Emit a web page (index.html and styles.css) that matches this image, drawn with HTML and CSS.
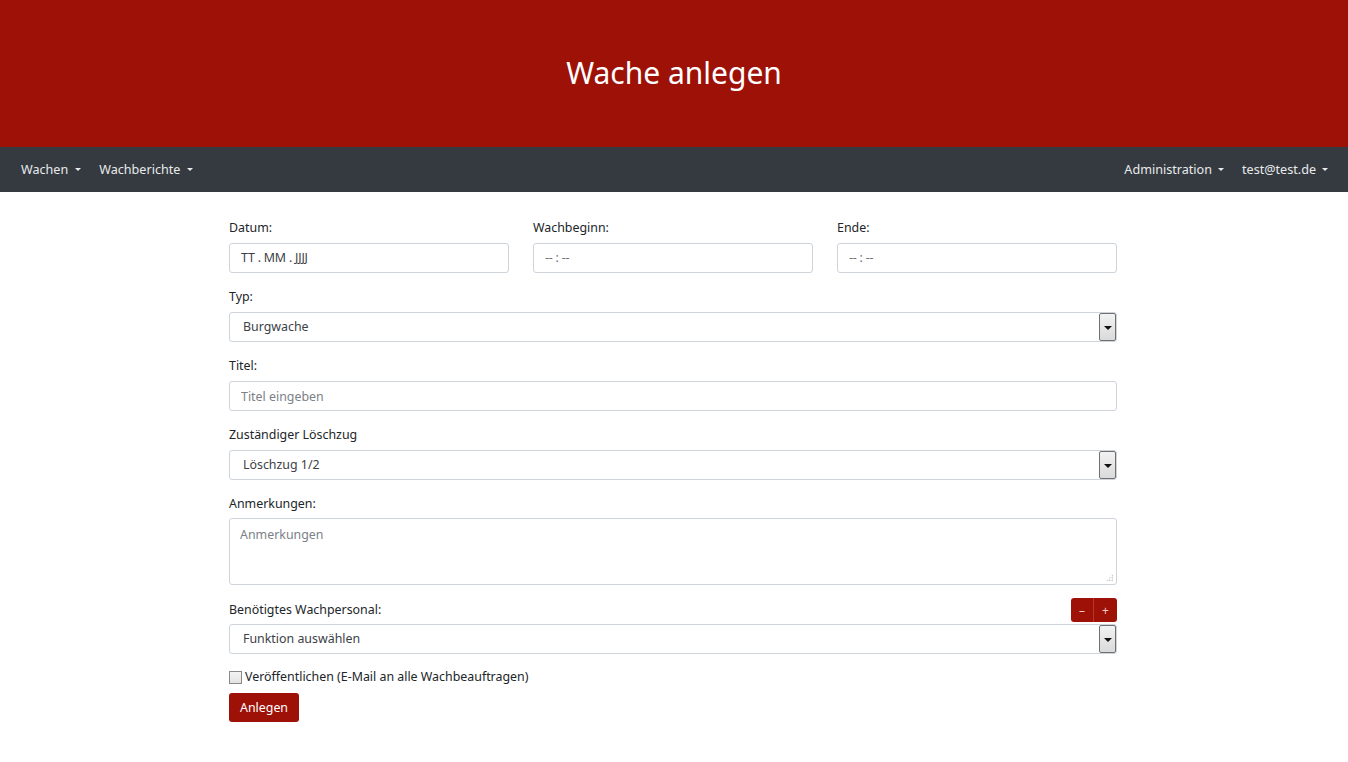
FILE: index.html
```html
<!DOCTYPE html>
<html lang="de">
<head>
<meta charset="utf-8">
<title>Wache anlegen</title>
<link rel="stylesheet" href="styles.css">
</head>
<body>
<header class="banner"><h1>Wache anlegen</h1></header>
<nav class="navbar">
  <ul class="nav">
    <li><a href="#">Wachen<span class="caret"></span></a></li>
    <li><a href="#">Wachberichte<span class="caret"></span></a></li>
  </ul>
  <ul class="nav">
    <li><a href="#">Administration<span class="caret"></span></a></li>
    <li><a href="#">test@test.de<span class="caret"></span></a></li>
  </ul>
</nav>
<main class="content">
  <form class="form">
    <div class="row3">
      <div class="group">
        <label>Datum:</label>
        <div class="input fake">TT . MM . JJJJ</div>
      </div>
      <div class="group">
        <label>Wachbeginn:</label>
        <div class="input fake dim">-- : --</div>
      </div>
      <div class="group">
        <label>Ende:</label>
        <div class="input fake dim">-- : --</div>
      </div>
    </div>
    <div class="group">
      <label>Typ:</label>
      <div class="select"><span>Burgwache</span><i class="arrow"></i></div>
    </div>
    <div class="group">
      <label>Titel:</label>
      <input class="input" type="text" placeholder="Titel eingeben">
    </div>
    <div class="group">
      <label>Zuständiger Löschzug</label>
      <div class="select"><span>Löschzug 1/2</span><i class="arrow"></i></div>
    </div>
    <div class="group">
      <label class="tl">Anmerkungen:</label>
      <div class="textarea"><span class="ph">Anmerkungen</span><i class="grip"></i></div>
    </div>
    <div class="group tight">
      <div class="labelrow">
        <label>Benötigtes Wachpersonal:</label>
        <div class="btngroup"><button type="button" class="sm">–</button><button type="button" class="sm">+</button></div>
      </div>
      <div class="select"><span>Funktion auswählen</span><i class="arrow"></i></div>
    </div>
    <div class="check"><span class="box"></span>Veröffentlichen (E-Mail an alle Wachbeauftragen)</div>
    <button type="button" class="primary">Anlegen</button>
  </form>
</main>
</body>
</html>
```
FILE: styles.css
```css
* { box-sizing: border-box; }
html, body { margin: 0; padding: 0; }
body {
  font-family: "Noto Sans", "Open Sans", sans-serif;
  font-size: 12.4px;
  color: #212529;
  background: #fff;
}
.banner {
  background: #9d1107;
  height: 147px;
  display: flex;
  align-items: center;
  justify-content: center;
}
.banner h1 {
  margin: 0;
  color: #fff;
  font-weight: 400;
  font-size: 30px;
  padding-bottom: 2px;
}
.navbar {
  background: #343a40;
  height: 45px;
  display: flex;
  justify-content: space-between;
  align-items: center;
  padding: 0 12px 0 12px;
}
.nav { list-style: none; margin: 0; padding: 0; display: flex; }
.nav a {
  display: flex;
  align-items: center;
  color: #e9eaeb;
  text-decoration: none;
  font-size: 12.6px;
  padding: 0 9px;
}
.nav:last-child a { padding: 0 8px; }
.nav:last-child li:first-child a { padding-right: 10px; }
.caret {
  display: inline-block;
  width: 0; height: 0;
  margin-left: 7px;
  border-left: 3px solid transparent;
  border-right: 3px solid transparent;
  border-top: 3px solid #e9eaeb;
}
.nav:last-child .caret { margin-left: 6px; }
.content { padding-top: 27px; }
.form { width: 888px; margin: 0 auto 0 229px; }
.row3 { display: grid; grid-template-columns: repeat(3, 1fr); gap: 24px; }
.group { margin-bottom: 15px; }
.group label { display: block; line-height: 18px; margin-bottom: 6px; }
.group label.tl { margin-bottom: 5px; }
.input, .select, .textarea {
  display: block;
  width: 100%;
  height: 30px;
  border: 1px solid #ced4da;
  border-radius: 3px;
  background: #fff;
  font-family: inherit;
  font-size: 12.4px;
  color: #495057;
}
.input { padding: 0 11px; line-height: 28px; }
.input::placeholder { color: #7b8187; }
.fake { color: #3c4146; letter-spacing: -0.2px; }
.dim { color: #6d7278; }
.select {
  position: relative;
  padding: 0 13px;
  line-height: 28px;
  color: #3c4146;
}
.arrow {
  position: absolute;
  right: 0; top: 0; bottom: 0;
  width: 17px;
  border: 1px solid #707070;
  border-radius: 2px;
  background: linear-gradient(to bottom, #f2f2f2, #dadada);
}
.arrow::after {
  content: "";
  position: absolute;
  left: 4px; top: 12px;
  border-left: 4px solid transparent;
  border-right: 4px solid transparent;
  border-top: 4px solid #111;
}
.textarea {
  position: relative;
  height: 67px;
  padding: 7px 10px;
  line-height: 18px;
}
.ph { color: #7b8187; }
.grip {
  position: absolute;
  right: 3px; bottom: 3px;
  width: 7px; height: 7px;
  background-image: radial-gradient(circle, #aaa 0.7px, transparent 0.9px);
  background-size: 2.5px 2.5px;
  clip-path: polygon(100% 0, 100% 100%, 0 100%);
}
.tight { margin-bottom: 14px; }
.labelrow {
  display: flex;
  justify-content: space-between;
  align-items: center;
  height: 24px;
  margin-top: -2px;
  margin-bottom: 2px;
}
.labelrow label { margin: 0; }
.btngroup { display: flex; }
.sm {
  width: 23px; height: 24px;
  border: 0;
  background: #9d1107;
  color: #f3c9c5;
  font-size: 12px;
  padding: 0;
  font-family: inherit;
}
.sm:first-child { border-radius: 3px 0 0 3px; border-right: 1px solid #b8352c; }
.sm:last-child { border-radius: 0 3px 3px 0; }
.check {
  display: flex;
  align-items: center;
  line-height: 18px;
  margin-bottom: 7px;
}
.box {
  width: 13px; height: 13px;
  border: 1px solid #8a8a8a;
  background: linear-gradient(to bottom, #f4f4f4, #e2e2e2);
  margin-right: 3px;
}
.primary {
  display: block;
  height: 29px;
  padding: 0 11px;
  border: 0;
  border-radius: 3px;
  background: #9d1107;
  color: #fff;
  font-family: inherit;
  font-size: 12.4px;
}
```
